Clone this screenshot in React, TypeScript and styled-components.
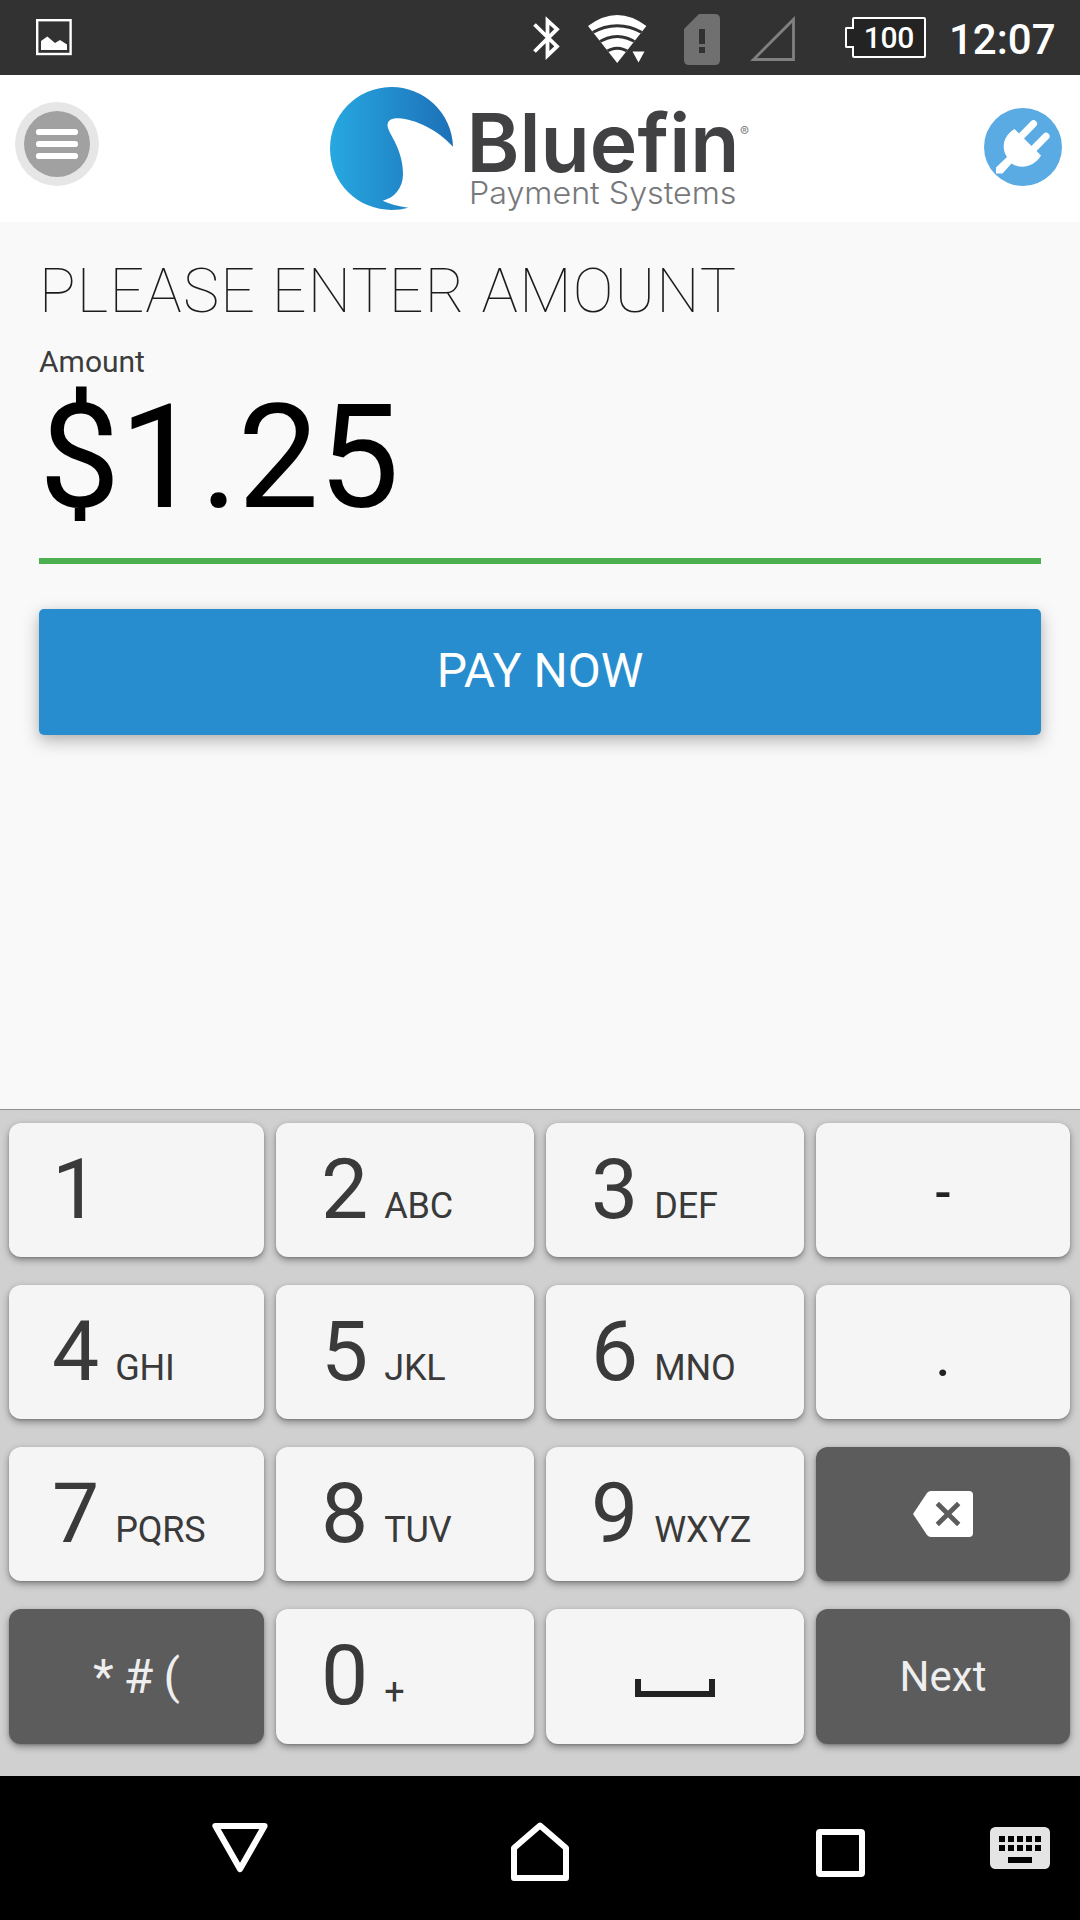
import React from 'react';
import styled, { createGlobalStyle } from 'styled-components';

const GlobalStyle = createGlobalStyle`
  * { box-sizing: border-box; }
  body { margin: 0; background: #f9f9f9; font-family: Roboto, "Noto Sans", sans-serif; }
  svg { display: block; flex: none; }
`;

const Screen = styled.div`
  display: flex;
  flex-direction: column;
  width: 1080px;
  height: 1920px;
  overflow: hidden;
  background: #f9f9f9;
`;

const StatusBar = styled.div`
  display: flex;
  justify-content: space-between;
  height: 75px;
  padding: 0 25px 0 36px;
  background: #323232;
`;

const StatusGroup = styled.div`
  display: flex;
  align-items: center;
  height: 75px;
`;

const Battery = styled.div`
  display: flex;
  align-items: center;
  margin: 0 23px 0 50px;
`;

const BatteryNub = styled.div`
  width: 9px;
  height: 21px;
  margin-right: -2px;
  border: 2px solid #fff;
  border-right: 0;
  border-radius: 2px 0 0 2px;
  background: #232323;
  z-index: 1;
`;

const BatteryBody = styled.div`
  display: flex;
  justify-content: center;
  width: 74px;
  height: 41px;
  border: 2px solid #fff;
  border-radius: 2px;
  background: #232323;
  color: #fff;
  font-size: 30px;
  font-weight: 500;
  line-height: 37px;
  letter-spacing: -0.3px;
`;

const Clock = styled.div`
  width: 106px;
  padding-top: 5px;
  color: #fff;
  font-size: 42px;
  font-weight: 500;
  line-height: 48px;
  white-space: nowrap;
`;

const Header = styled.header`
  display: flex;
  justify-content: space-between;
  align-items: flex-start;
  height: 147px;
  padding: 12px 18px 0 15px;
  background: #fff;
`;

const IconButton = styled.button<{ $top: number }>`
  margin: ${(p) => p.$top}px 0 0;
  padding: 0;
  border: 0;
  background: none;
`;

const Brand = styled.div`
  margin-left: 1px;
`;

const Main = styled.main`
  flex: 1;
  padding: 29px 39px 0;
`;

const Title = styled.h1`
  margin: 0;
  color: #1c1c1c;
  font-size: 61px;
  font-weight: 100;
  line-height: 80px;
  letter-spacing: 1.17px;
  white-space: nowrap;
`;

const Label = styled.label`
  display: block;
  margin-top: 14px;
  color: #3c3c3c;
  font-size: 30px;
  line-height: 34px;
`;

const Amount = styled.div`
  height: 185px;
  border-bottom: 6px solid #4caf50;
  color: #000;
  font-size: 144.5px;
  line-height: 157px;
  letter-spacing: -0.6px;
`;

const PayButton = styled.button`
  display: block;
  width: 100%;
  height: 126px;
  margin-top: 45px;
  padding: 0 0 4px;
  border: 0;
  border-radius: 5px;
  background: #278dce;
  box-shadow: 0 6px 18px rgba(0, 0, 0, 0.26), 0 2px 8px rgba(0, 0, 0, 0.07);
  color: #fff;
  font-family: inherit;
  font-size: 48px;
`;

const Keyboard = styled.div`
  display: grid;
  grid-template-columns: 255px 258px 258px 254px;
  grid-template-rows: 134px 134px 134px 135px;
  column-gap: 12px;
  row-gap: 28px;
  height: 667px;
  padding: 13px 10px 0 9px;
  border-top: 1px solid #8f8f8f;
  background: #d0d0d0;
`;

const Key = styled.button<{ $dark?: boolean }>`
  display: flex;
  justify-content: center;
  align-items: center;
  padding: 0;
  border: 0;
  border-radius: 12px;
  background: ${(p) => (p.$dark ? '#5c5c5c' : '#f5f5f5')};
  box-shadow: 0 3px 7px rgba(0, 0, 0, 0.38), 0 1px 2px rgba(0, 0, 0, 0.15);
  color: ${(p) => (p.$dark ? '#eee' : '#222')};
  font-family: inherit;
`;

const DigitKey = styled(Key)<{ $inset: number }>`
  justify-content: flex-start;
  align-items: baseline;
  gap: 16px;
  padding: 25px 0 0 ${(p) => p.$inset}px;
  color: #3a3a3a;
`;

const Digit = styled.span`
  font-size: 84px;
  line-height: 84px;
`;

const Letters = styled.span`
  font-size: 36px;
  letter-spacing: -0.2px;
`;

const KeyText = styled.span<{ $size: number; $drop?: number; $bold?: boolean }>`
  padding-top: ${(p) => p.$drop ?? 0}px;
  font-size: ${(p) => p.$size}px;
  font-weight: ${(p) => (p.$bold ? 500 : 400)};
  word-spacing: -1.8px;
`;

const NavBar = styled.nav`
  display: flex;
  align-items: flex-start;
  height: 144px;
  padding: 46px 30px 0 212px;
  background: #000;
`;

const NavItem = styled.div<{ $left?: number; $top?: number }>`
  margin: ${(p) => p.$top ?? 0}px 0 0 ${(p) => p.$left ?? 0}px;
`;

const PictureIcon = () => (
  <svg width="36" height="37" viewBox="0 0 36 37">
    <rect x="1.2" y="1.2" width="33.4" height="33.8" fill="none" stroke="#fff" strokeWidth="2.4" />
    <path d="M5 31V22L11.3 17.5L19 24L24 21L31 25.5V31Z" fill="#fff" />
  </svg>
);

const BluetoothIcon = () => (
  <svg width="27" height="44" viewBox="0 0 27 44">
    <path d="M1.5 8.5L24 30.5L14.5 39.5V4.5L24 13.2L1.5 35.5" fill="none" stroke="#fff" strokeWidth="3.8" />
  </svg>
);

const WifiIcon = () => (
  <svg width="59" height="49" viewBox="0 0 59 49">
    <defs>
      <clipPath id="fan">
        <path d="M0 11Q29.2 -11 58.4 11L29.2 48Z" />
      </clipPath>
    </defs>
    <g clipPath="url(#fan)">
      <rect width="59" height="49" fill="#fff" />
      <g fill="none" stroke="#323232" strokeWidth="3">
        <path d="M3.5 18Q29.2 3.5 55 18" />
        <path d="M9 28.5Q29.2 14.5 49.5 28.5" />
        <path d="M17 37.5Q29.2 29 41.5 37.5" />
      </g>
    </g>
    <path d="M42 35H58L50 49Z" fill="#323232" />
    <path d="M44.5 36.5H56.5L50.5 47.5Z" fill="#fff" />
  </svg>
);

const SimIcon = () => (
  <svg width="36" height="51" viewBox="0 0 36 51">
    <path d="M15 0H31Q36 0 36 5V46Q36 51 31 51H5Q0 51 0 46V15Z" fill="#707070" />
    <path d="M15 15H21V30H15ZM15 33H21V39H15Z" fill="#323232" />
  </svg>
);

const SignalIcon = () => (
  <svg width="45" height="45" viewBox="0 0 45 45">
    <path d="M3.5 43.5H43.5V3.5Z" fill="none" stroke="#808080" strokeWidth="2.8" />
  </svg>
);

const MenuIcon = () => (
  <svg width="84" height="84" viewBox="0 0 84 84">
    <circle cx="42" cy="42" r="42" fill="#e6e6e6" />
    <circle cx="42" cy="42" r="33" fill="#a1a1a1" />
    <path d="M24 30H60M24 42H60M24 54H60" stroke="#fff" strokeWidth="6.2" strokeLinecap="round" />
  </svg>
);

const BluefinLogo = () => (
  <svg width="424" height="126" viewBox="0 0 424 126" fontFamily="Inter, sans-serif">
    <defs>
      <linearGradient id="wave">
        <stop offset="0" stopColor="#27a8e0" />
        <stop offset="1" stopColor="#1d70b7" />
      </linearGradient>
    </defs>
    <path
      d="M123 59.8A61.5 61.5 0 1 0 61.5 123Q70.5 123 78.3 120.7Q63 118.5 52.7 113.7C64 111 73 101.5 73 87C73 74 69 62 62.5 50.5C58 42 57.5 40 57.5 38C58.2 32.500 62 31.3 68.500 31.3C85 32 108 43 123 59.8Z"
      fill="url(#wave)"
    />
    <text x="136.5" y="85" fontSize="81.5" fontWeight="600" fill="#414042" textLength="273" lengthAdjust="spacingAndGlyphs">Bluefin</text>
    <text x="139" y="116.6" fontSize="31" fontWeight="300" fill="#77787b" textLength="267.5" lengthAdjust="spacingAndGlyphs">Payment Systems</text>
    <text x="410" y="49" fontSize="13.5" fill="#808285">®</text>
  </svg>
);

const PlugIcon = () => (
  <svg width="78" height="78" viewBox="0 0 78 78">
    <circle cx="39" cy="39" r="39" fill="#5aabe3" />
    <g stroke="#fff" strokeWidth="7.2" strokeLinecap="round">
      <path d="M36 29.5L49.5 15.8M48.5 42L62 28.3" />
    </g>
    <path d="M30.5 21L57 47.5C50 59 37 61.5 27.5 55.5L18.5 65.5H12V59.5L23 49C17 40 19 28 30.5 21Z" fill="#fff" />
  </svg>
);

const BackspaceIcon = () => (
  <svg width="60" height="46" viewBox="0 0 60 46">
    <path d="M0 23L14 2Q15.5 0 18 0H56Q60 0 60 4V42Q60 46 56 46H18Q15.5 46 14 44Z" fill="#fff" />
    <path d="M24.3 12.5L45.7 33.5M45.7 12.5L24.3 33.5" stroke="#5c5c5c" strokeWidth="4.8" />
  </svg>
);

const SpaceIcon = styled.span`
  width: 80px;
  height: 18px;
  margin-top: 23px;
  border: 6px solid #222;
  border-top: 0;
`;

const BackIcon = () => (
  <svg width="56" height="52" viewBox="0 0 56 52">
    <path d="M3.5 4H52.5L28 47Z" fill="none" stroke="#fff" strokeWidth="6.2" strokeLinejoin="round" />
  </svg>
);

const HomeIcon = () => (
  <svg width="58" height="60" viewBox="0 0 58 60">
    <path d="M3 26L29 3.5L55 26V56H3Z" fill="none" stroke="#fff" strokeWidth="6" strokeLinejoin="round" />
  </svg>
);

const RecentIcon = styled.div`
  width: 49px;
  height: 48px;
  border: 6px solid #fff;
  border-radius: 4px;
`;

const KeyboardIcon = () => (
  <svg width="60" height="42" viewBox="0 0 60 42">
    <rect width="60" height="42" rx="5.5" fill="#e4e4e4" />
    {[0, 1, 2, 3, 4].map((i) => (
      <path key={i} d={`M${9 + i * 9} 9h6v6h-6zM${9 + i * 9} 18h6v6h-6z`} />
    ))}
    <path d="M18 30H42V36H18Z" />
  </svg>
);

const NumberKey = ({ digit, letters, inset = 45 }: { digit: string; letters?: string; inset?: number }) => (
  <DigitKey $inset={inset}>
    <Digit>{digit}</Digit>
    {letters && <Letters>{letters}</Letters>}
  </DigitKey>
);

export default function App() {
  return (
    <>
      <GlobalStyle />
      <Screen>
        <StatusBar>
          <StatusGroup><PictureIcon /></StatusGroup>
          <StatusGroup>
            <BluetoothIcon />
            <NavItem $left={28} $top={4}><WifiIcon /></NavItem>
            <NavItem $left={37} $top={3}><SimIcon /></NavItem>
            <NavItem $left={30} $top={2}><SignalIcon /></NavItem>
            <Battery>
              <BatteryNub />
              <BatteryBody>100</BatteryBody>
            </Battery>
            <Clock>12:07</Clock>
          </StatusGroup>
        </StatusBar>
        <Header>
          <IconButton $top={15} aria-label="Menu"><MenuIcon /></IconButton>
          <Brand><BluefinLogo /></Brand>
          <IconButton $top={21} aria-label="Connection"><PlugIcon /></IconButton>
        </Header>
        <Main>
          <Title>PLEASE ENTER AMOUNT</Title>
          <Label>Amount</Label>
          <Amount>$1.25</Amount>
          <PayButton>PAY NOW</PayButton>
        </Main>
        <Keyboard>
          <NumberKey digit="1" inset={43} />
          <NumberKey digit="2" letters="ABC" />
          <NumberKey digit="3" letters="DEF" />
          <Key><KeyText $size={50} $drop={6} $bold>-</KeyText></Key>
          <NumberKey digit="4" letters="GHI" inset={43} />
          <NumberKey digit="5" letters="JKL" />
          <NumberKey digit="6" letters="MNO" />
          <Key><KeyText $size={50} $drop={13} $bold>.</KeyText></Key>
          <NumberKey digit="7" letters="PQRS" inset={43} />
          <NumberKey digit="8" letters="TUV" />
          <NumberKey digit="9" letters="WXYZ" />
          <Key $dark aria-label="Backspace"><BackspaceIcon /></Key>
          <Key $dark><KeyText $size={48}>* # (</KeyText></Key>
          <NumberKey digit="0" letters="+" />
          <Key aria-label="Space"><SpaceIcon /></Key>
          <Key $dark><KeyText $size={42}>Next</KeyText></Key>
        </Keyboard>
        <NavBar>
          <NavItem><BackIcon /></NavItem>
          <NavItem $left={243}><HomeIcon /></NavItem>
          <NavItem $left={247} $top={7}><RecentIcon /></NavItem>
          <NavItem $left={125} $top={5}><KeyboardIcon /></NavItem>
        </NavBar>
      </Screen>
    </>
  );
}
